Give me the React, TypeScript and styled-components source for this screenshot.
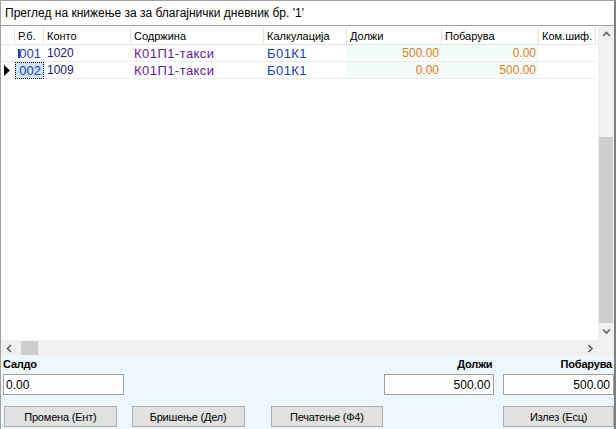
import React from "react";
import styled, { createGlobalStyle } from "styled-components";

const GlobalStyle = createGlobalStyle`
  html, body { margin: 0; padding: 0; background: #ffffff; }
  body { font-family: "Liberation Sans", Arial, sans-serif; }
  * { box-sizing: border-box; }
`;

const COLS = [14, 29, 87, 133, 83, 95, 97, 57];
const colTemplate = COLS.map((c) => `${c}px`).join(" ");

const Window = styled.div`
  width: 616px;
  height: 429px;
  display: flex;
  flex-direction: column;
  border-left: 1px solid #a0a0a0;
  border-right: 2px solid #7f7f7f;
  border-top: 1px solid #a0a0a0;
  background: #ffffff;
  overflow: hidden;
`;

const TitleBar = styled.div`
  height: 24px;
  display: flex;
  align-items: center;
  padding-left: 4px;
  font-size: 12px;
  color: #000;
  white-space: nowrap;
`;

const GridFrame = styled.div`
  height: 330px;
  border-top: 1px solid #a0a0a0;
  border-bottom: 1px solid #a0a0a0;
  display: grid;
  grid-template-columns: 1fr 16px;
  grid-template-rows: 1fr 17px;
  background: #ffffff;
`;

const TableArea = styled.div`
  overflow: hidden;
  padding-top: 1px;
`;

const Row = styled.div<{ $h: number }>`
  display: grid;
  grid-template-columns: ${colTemplate};
  height: ${(p) => p.$h}px;
`;

const HeadCell = styled.div`
  font-size: 11px;
  color: #000;
  display: flex;
  align-items: center;
  padding-left: 3px;
  border-right: 1px solid #e4e4e4;
  border-bottom: 1px solid #e4e4e4;
  white-space: nowrap;
  overflow: hidden;
`;

const Cell = styled.div<{
  $color?: string;
  $align?: "left" | "right";
  $bg?: string;
  $selected?: boolean;
  $size?: number;
  $wide?: boolean;
  $sliver?: boolean;
}>`
  position: relative;
  font-size: ${(p) => p.$size || 12}px;
  letter-spacing: ${(p) => (p.$wide ? "0.45px" : "0")};
  color: ${(p) => p.$color || "#000"};
  background: ${(p) => (p.$selected ? "#cce4f7" : p.$bg || "#ffffff")};
  display: flex;
  align-items: center;
  justify-content: ${(p) => (p.$align === "right" ? "flex-end" : "flex-start")};
  padding: ${(p) => (p.$align === "right" ? "0 3px 0 0" : "0 0 0 3px")};
  border-bottom: 1px solid #ececec;
  white-space: nowrap;
  overflow: hidden;
  ${(p) => (p.$selected ? "outline: 1px dotted #000; outline-offset: -1px;" : "")}
  ${(p) =>
    p.$sliver
      ? `&::before {
          content: "";
          position: absolute;
          left: 3px;
          top: 4px;
          width: 2px;
          height: 9px;
          background: ${p.$color};
        }`
      : ""}
`;

const RowHeader = styled.div`
  display: flex;
  align-items: center;
  padding-left: 3px;
  border-bottom: 1px solid #ececec;
  background: #ffffff;
`;

const VScroll = styled.div`
  background: #f0f0f0;
  display: flex;
  flex-direction: column;
  align-items: center;
`;

const HScroll = styled.div`
  background: #f0f0f0;
  display: flex;
  align-items: center;
`;

const Corner = styled.div`
  background: #f0f0f0;
`;

const ArrowBox = styled.div`
  width: 16px;
  height: 17px;
  display: flex;
  align-items: center;
  justify-content: center;
  flex: none;
`;

const Track = styled.div<{ $vertical?: boolean }>`
  flex: 1;
  display: flex;
  flex-direction: ${(p) => (p.$vertical ? "column" : "row")};
  align-items: center;
`;

const Thumb = styled.div<{ $vertical?: boolean }>`
  background: repeating-conic-gradient(#c4c4c4 0 25%, #d6d6d6 0 50%) 0 0 / 2px 2px;
  ${(p) =>
    p.$vertical
      ? "width: 14px; margin-top: 94px; height: 186px;"
      : "height: 15px; width: 17px; margin-left: 4px;"}
`;

const Footer = styled.div`
  flex: 1;
  background: repeating-conic-gradient(#eaf4fc 0 25%, #f3f9fe 0 50%) 0 0 / 2px 2px;
  display: flex;
  flex-direction: column;
  padding: 2px 0 0 2px;
`;

const FieldRow = styled.div`
  display: flex;
  align-items: flex-end;
`;

const Field = styled.div<{ $w: number; $ml?: number; $align?: "left" | "right" }>`
  width: ${(p) => p.$w}px;
  margin-left: ${(p) => p.$ml || 0}px;
  display: flex;
  flex-direction: column;
  align-items: ${(p) => (p.$align === "right" ? "flex-end" : "flex-start")};
`;

const Label = styled.div`
  font-size: 11px;
  font-weight: bold;
  letter-spacing: -0.2px;
  color: #000;
  height: 14px;
  line-height: 14px;
  margin-bottom: 3px;
  padding-right: 2px;
`;

const Input = styled.div<{ $align?: "left" | "right" }>`
  width: 100%;
  height: 21px;
  background: #ffffff;
  border: 1px solid #a0a0a0;
  font-size: 12px;
  color: #000;
  display: flex;
  align-items: center;
  justify-content: ${(p) => (p.$align === "right" ? "flex-end" : "flex-start")};
  padding: 0 3px 0 2px;
`;

const ButtonBar = styled.div`
  display: flex;
  margin-top: 11px;
  padding-left: 1px;
`;

const Button = styled.div<{ $w: number; $ml?: number }>`
  width: ${(p) => p.$w}px;
  margin-left: ${(p) => p.$ml || 0}px;
  height: 21px;
  border: 1px solid #adadad;
  background: repeating-conic-gradient(#dcdcdc 0 25%, #e8e8e8 0 50%) 0 0 / 2px 2px;
  font-size: 11px;
  letter-spacing: -0.2px;
  color: #000;
  display: flex;
  align-items: center;
  justify-content: center;
`;

const Chevron = ({ dir }: { dir: "up" | "down" | "left" | "right" }) => {
  const paths: Record<string, string> = {
    up: "M1 5 L4.5 1.5 L8 5",
    down: "M1 1.5 L4.5 5 L8 1.5",
    left: "M5 1 L1.5 4.5 L5 8",
    right: "M1.5 1 L5 4.5 L1.5 8",
  };
  const vertical = dir === "up" || dir === "down";
  return (
    <svg width={vertical ? 9 : 7} height={vertical ? 7 : 9} viewBox={vertical ? "0 0 9 7" : "0 0 7 9"}>
      <path d={paths[dir]} fill="none" stroke="#606060" strokeWidth="1.6" />
    </svg>
  );
};

const RowMarker = () => (
  <svg width="6" height="11" viewBox="0 0 6 11">
    <path d="M0 0 L6 5.5 L0 11 Z" fill="#000" />
  </svg>
);

const C_RB = "#1f3fb8";
const C_KONTO = "#1a1a80";
const C_SODR = "#5e1e9e";
const C_KALK = "#2038c8";
const C_AMT = "#e47d1a";
const AMT_BG = "#f3fbfb";

const rows = [
  { rb: "001", konto: "1020", sodr: "К01П1-такси", kalk: "Б01К1", dolzi: "500.00", pob: "0.00", current: false },
  { rb: "002", konto: "1009", sodr: "К01П1-такси", kalk: "Б01К1", dolzi: "0.00", pob: "500.00", current: true },
];

export default function App() {
  return (
    <>
      <GlobalStyle />
      <Window>
        <TitleBar>Преглед на книжење за за благајнички дневник бр. '1'</TitleBar>
        <GridFrame>
          <TableArea>
            <Row $h={18}>
              <HeadCell />
              <HeadCell>Р.б.</HeadCell>
              <HeadCell>Конто</HeadCell>
              <HeadCell>Содржина</HeadCell>
              <HeadCell>Калкулација</HeadCell>
              <HeadCell>Должи</HeadCell>
              <HeadCell>Побарува</HeadCell>
              <HeadCell>Ком.шиф.</HeadCell>
            </Row>
            {rows.map((r) => (
              <Row $h={17} key={r.rb}>
                <RowHeader>{r.current ? <RowMarker /> : null}</RowHeader>
                <Cell
                  $color={C_RB}
                  $align="right"
                  $size={13}
                  $selected={r.current}
                  $sliver={!r.current}
                >
                  {r.rb}
                </Cell>
                <Cell $color={C_KONTO}>{r.konto}</Cell>
                <Cell $color={C_SODR} $size={13} $wide>
                  {r.sodr}
                </Cell>
                <Cell $color={C_KALK} $size={13} $wide>
                  {r.kalk}
                </Cell>
                <Cell $color={C_AMT} $align="right" $bg={AMT_BG}>
                  {r.dolzi}
                </Cell>
                <Cell $color={C_AMT} $align="right" $bg={AMT_BG}>
                  {r.pob}
                </Cell>
                <Cell />
              </Row>
            ))}
          </TableArea>
          <VScroll>
            <ArrowBox>
              <Chevron dir="up" />
            </ArrowBox>
            <Track $vertical>
              <Thumb $vertical />
            </Track>
            <ArrowBox>
              <Chevron dir="down" />
            </ArrowBox>
          </VScroll>
          <HScroll>
            <ArrowBox>
              <Chevron dir="left" />
            </ArrowBox>
            <Track>
              <Thumb />
            </Track>
            <ArrowBox>
              <Chevron dir="right" />
            </ArrowBox>
          </HScroll>
          <Corner />
        </GridFrame>
        <Footer>
          <FieldRow>
            <Field $w={121}>
              <Label>Салдо</Label>
              <Input>0.00</Input>
            </Field>
            <Field $w={111} $ml={260} $align="right">
              <Label>Должи</Label>
              <Input $align="right">500.00</Input>
            </Field>
            <Field $w={111} $ml={9} $align="right">
              <Label>Побарува</Label>
              <Input $align="right">500.00</Input>
            </Field>
          </FieldRow>
          <ButtonBar>
            <Button $w={113}>Промена (Ент)</Button>
            <Button $w={113} $ml={15}>Бришење (Дел)</Button>
            <Button $w={113} $ml={26}>Печатење (Ф4)</Button>
            <Button $w={111} $ml={120}>Излез (Есц)</Button>
          </ButtonBar>
        </Footer>
      </Window>
    </>
  );
}
